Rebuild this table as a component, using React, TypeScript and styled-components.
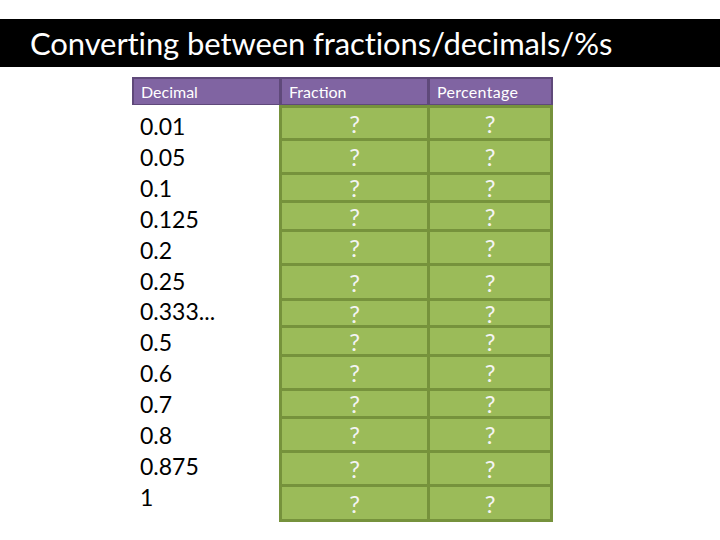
import styled, { createGlobalStyle } from 'styled-components';

const GlobalStyle = createGlobalStyle`
    body {
        margin: 0;
        background: #ffffff;
        font-family: Lato, 'Liberation Sans', sans-serif;
    }
`;

const decimals = [
    '0.01', '0.05', '0.1', '0.125', '0.2', '0.25', '0.333...',
    '0.5', '0.6', '0.7', '0.8', '0.875', '1',
];

// row heights as drawn in the slide (not all rows are equal)
const rowHeights = [30, 31, 25, 26, 31, 32, 24, 26, 31, 25, 31, 31, 32];

const colors = {
    purple: '#8064a2',
    purpleDark: '#5f497a',
    green: '#9bbb59',
    greenDark: '#76923c',
};

const App = () => {
    return (
        <Page>
            <GlobalStyle />
            <TitleBar>
                <Title>Converting between fractions/decimals/%s</Title>
            </TitleBar>

            <Table>
                <HeaderRow>
                    <HeaderCell>Decimal</HeaderCell>
                    <HeaderCell>Fraction</HeaderCell>
                    <HeaderCell $spaced>Percentage</HeaderCell>
                </HeaderRow>

                <Body>
                    <DecimalList>
                        {decimals.map((d) => (
                            <DecimalItem key={d}>{d}</DecimalItem>
                        ))}
                    </DecimalList>

                    <AnswerGrid
                        style={{ gridTemplateRows: rowHeights.map((h) => `${h}px`).join(' ') }}
                    >
                        {rowHeights.flatMap((_, i) => [
                            <AnswerCell key={`f${i}`}>?</AnswerCell>,
                            <AnswerCell key={`p${i}`}>?</AnswerCell>,
                        ])}
                    </AnswerGrid>
                </Body>
            </Table>
        </Page>
    );
};

export default App;

const Page = styled.div`
    width: 720px;
    height: 540px;
    padding-top: 19px;
    box-sizing: border-box;
`;

const TitleBar = styled.div`
    height: 48px;
    background: #000000;
    display: flex;
    align-items: center;
    padding-left: 30px;
`;

const Title = styled.h1`
    margin: 0;
    font-family: Lato, 'Liberation Sans', sans-serif;
    font-weight: 400;
    font-size: 31px;
    color: #ffffff;
    letter-spacing: -0.1px;
`;

const Table = styled.div`
    margin: 10px 0 0 132px;
    width: 421px;
    display: flex;
    flex-direction: column;
`;

const HeaderRow = styled.div`
    height: 28px;
    box-sizing: border-box;
    display: grid;
    grid-template-columns: 145px 145px 121px;
    gap: 3px;
    border: 2px solid ${colors.purpleDark};
    border-bottom-width: 1px;
    background: ${colors.purpleDark};
`;

const HeaderCell = styled.div<{ $spaced?: boolean }>`
    background: ${colors.purple};
    color: #ffffff;
    font-size: 16px;
    display: flex;
    align-items: center;
    padding-left: 7px;
    letter-spacing: ${(p) => (p.$spaced ? '0.3px' : '0')};
`;

const Body = styled.div`
    display: flex;
    align-items: flex-start;
`;

const DecimalList = styled.div`
    width: 147px;
    padding: 6px 0 0 8px;
    box-sizing: border-box;
    display: flex;
    flex-direction: column;
`;

const DecimalItem = styled.div`
    font-size: 23px;
    line-height: 30.9px;
    color: #000000;
`;

const AnswerGrid = styled.div`
    width: 274px;
    box-sizing: border-box;
    display: grid;
    grid-template-columns: 145px 120px;
    gap: 3px;
    padding: 3px;
    background: ${colors.greenDark};
`;

const AnswerCell = styled.div`
    background: ${colors.green};
    color: #f4f4f4;
    font-size: 24px;
    display: flex;
    align-items: center;
    justify-content: center;
`;
